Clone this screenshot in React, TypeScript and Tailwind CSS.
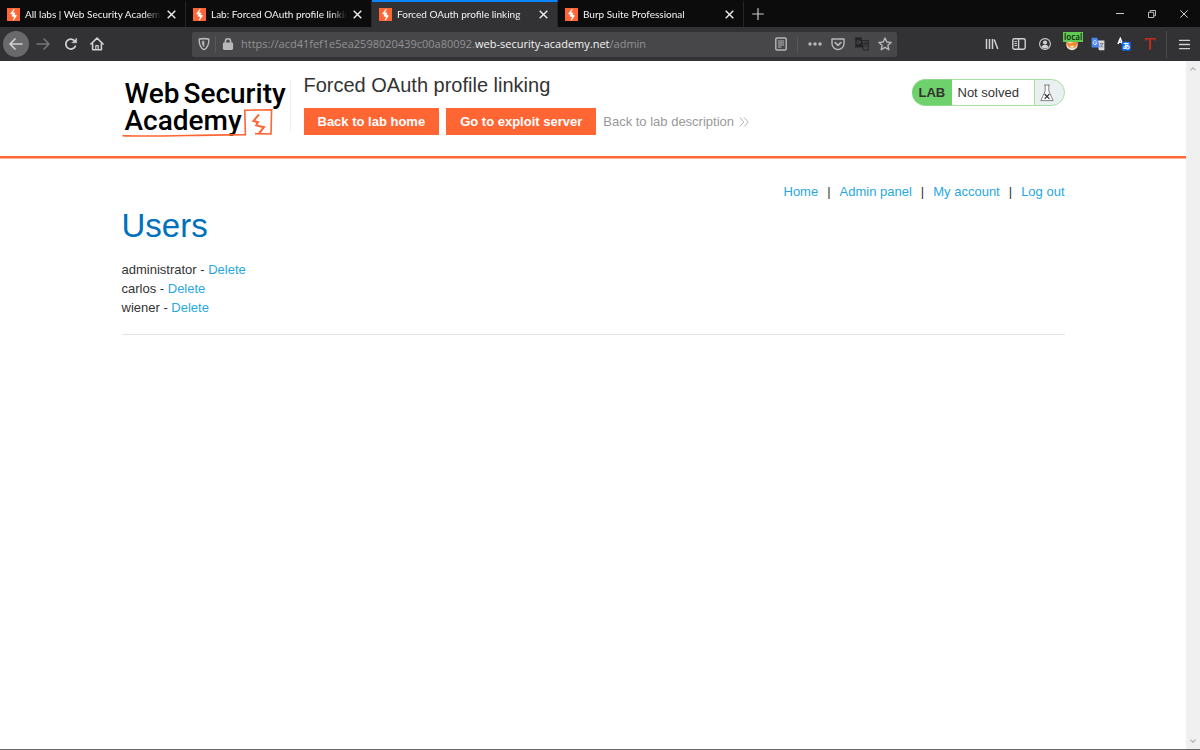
import React from "react";
import { clsx } from "clsx";

const tabs = [
  { title: "All labs | Web Security Academy", active: false },
  { title: "Lab: Forced OAuth profile linking", active: false },
  { title: "Forced OAuth profile linking", active: true },
  { title: "Burp Suite Professional", active: false },
];

const users = ["administrator", "carlos", "wiener"];

const navLinks = ["Home", "Admin panel", "My account", "Log out"];

function Favicon() {
  return (
    <svg viewBox="0 0 13 13" className="size-[13px] shrink-0">
      <rect width="13" height="13" fill="#ff6633" />
      <path d="M7 0.8 L3 6 L5.6 6.6 L4.4 8.2 L7.2 9 L5.6 12.2 L6.6 12.6 L10 7.4 L7.4 6.4 L8.6 5 L6 4.2 L7.8 1.2 Z" fill="#fff" />
    </svg>
  );
}

function CloseIcon() {
  return (
    <svg viewBox="0 0 9 9" className="size-[9px]" stroke="#eee" strokeWidth="1.4" fill="none">
      <path d="M0.7 0.7 L8.3 8.3 M8.3 0.7 L0.7 8.3" />
    </svg>
  );
}

function Icon({ children, className }: { children: React.ReactNode; className?: string }) {
  return (
    <svg
      viewBox="0 0 14 14"
      className={clsx("shrink-0", className || "size-[14px]")}
      fill="none"
      stroke="currentColor"
      strokeWidth="1.4"
      strokeLinecap="round"
      strokeLinejoin="round"
    >
      {children}
    </svg>
  );
}

function ToolButton({ label, children, className }: { label: string; children: React.ReactNode; className?: string }) {
  return (
    <button aria-label={label} className={clsx("flex items-center justify-center h-[26px] shrink-0", className)}>
      {children}
    </button>
  );
}

function TabStrip() {
  return (
    <div className="flex h-[27px] bg-[#0c0c0d]">
      {tabs.map((tab) => (
        <div
          key={tab.title}
          className={clsx(
            "flex items-center w-[186px] pl-[7px] pr-2 pb-px border-t-2 border-r border-r-[#252526]",
            tab.active ? "bg-[#323234] border-t-[#0a84ff]" : "border-t-transparent"
          )}
        >
          <Favicon />
          <button className="flex-1 min-w-0 ml-[5px] mr-1 text-left font-['Lato',sans-serif] text-[10px] leading-4 text-[#f4f4f5] whitespace-nowrap overflow-hidden [mask-image:linear-gradient(to_right,#000_88%,transparent)]">
            {tab.title}
          </button>
          <button aria-label="Close tab" className="flex items-center justify-center size-3">
            <CloseIcon />
          </button>
        </div>
      ))}
      <button aria-label="New tab" className="flex items-center justify-center w-[27px] text-[#c8c8c8]">
        <Icon className="size-3">
          <path d="M7 0.7 V13.3 M0.7 7 H13.3" />
        </Icon>
      </button>
      <div className="flex items-center ml-auto text-[#d0d0d0]">
        <button aria-label="Minimize" className="flex items-center justify-center w-8 h-full">
          <svg viewBox="0 0 8 8" className="size-2" stroke="currentColor" fill="none"><path d="M0 3.5 H8" /></svg>
        </button>
        <button aria-label="Restore" className="flex items-center justify-center w-8 h-full">
          <svg viewBox="0 0 8 8" className="size-2" stroke="currentColor" strokeWidth="0.9" fill="none">
            <path d="M0.5 2.3 H5.7 V7.5 H0.5 Z M2.3 2 V0.5 H7.5 V5.7 H6" />
          </svg>
        </button>
        <button aria-label="Close window" className="flex items-center justify-center w-8 h-full">
          <svg viewBox="0 0 8 8" className="size-2" stroke="currentColor" fill="none"><path d="M0.3 0.3 L7.7 7.7 M7.7 0.3 L0.3 7.7" /></svg>
        </button>
      </div>
    </div>
  );
}

function UrlBar() {
  return (
    <div className="flex items-center flex-1 min-w-0 h-[25px] px-[5px] mx-[82px] rounded-[2px] bg-[#474749] text-[#b8b8ba]">
      <Icon>
        <path d="M7 1.5 C8.6 1.8 10 2 11.8 2 C12 7 11 10.8 7 12.6 C3 10.8 2 7 2.2 2 C4 2 5.4 1.8 7 1.5 Z" />
        <path d="M7 4.4 V9.6 C5.6 8.6 5.2 7 5.2 4.6 Z" fill="currentColor" strokeWidth="0.6" />
      </Icon>
      <span className="w-px h-[17px] ml-1 mr-[5px] bg-[#58585a]" />
      <Icon>
        <rect x="2.6" y="6.2" width="8.8" height="6" rx="0.6" fill="currentColor" />
        <path d="M4.4 6 V4.4 A2.6 2.6 0 0 1 9.6 4.4 V6" strokeWidth="1.6" />
      </Icon>
      <div className="flex-1 min-w-0 ml-[6px] font-['Open_Sans',sans-serif] text-[11px] leading-4 text-[#919193] whitespace-nowrap overflow-hidden">
        https://acd41fef1e5ea2598020439c00a80092.<span className="text-[#f4f4f5]">web-security-academy.net</span>/admin
      </div>
      <ToolButton label="Reader view">
        <Icon>
          <rect x="1.8" y="1" width="10.4" height="12" rx="1.2" />
          <path d="M4.3 4 H9.7 M4.3 6 H9.7 M4.3 8 H9.7 M4.3 10 H7" strokeWidth="1" />
        </Icon>
      </ToolButton>
      <span className="w-px h-[17px] ml-[9px] mr-[10px] bg-[#58585a]" />
      <ToolButton label="Page actions">
        <Icon>
          <g fill="currentColor" stroke="none">
            <circle cx="2" cy="7" r="1.7" />
            <circle cx="7" cy="7" r="1.7" />
            <circle cx="12" cy="7" r="1.7" />
          </g>
        </Icon>
      </ToolButton>
      <ToolButton label="Save to Pocket" className="ml-[9px]">
        <Icon>
          <path d="M1 2 H13 V6.5 A6 6 0 0 1 1 6.5 Z" />
          <path d="M4.2 5.6 L7 8.3 L9.8 5.6" strokeWidth="1.6" />
        </Icon>
      </ToolButton>
      <ToolButton label="Translate page" className="ml-[10px] text-[#252527]">
        <Icon>
          <path d="M0.5 0.8 H6 L8.5 10 H0.5 Z" fill="currentColor" strokeWidth="0.8" />
          <path d="M7.5 3.6 H13.4 V13 H8.4 L7.5 10.5" strokeWidth="1" />
          <path d="M9 6 H12.4 M10.7 5 V6 M12 6 C11.5 8 10.5 9 9.5 9.6 M9.5 7 L12.2 9.8" strokeWidth="0.8" />
          <circle cx="3.5" cy="5.2" r="1.5" stroke="#5b5b5d" strokeWidth="0.8" />
        </Icon>
      </ToolButton>
      <ToolButton label="Bookmark this page" className="ml-[9px]">
        <Icon>
          <path d="M7 1 L8.8 5 L13.1 5.4 L9.9 8.3 L10.8 12.7 L7 10.4 L3.2 12.7 L4.1 8.3 L0.9 5.4 L5.2 5 Z" />
        </Icon>
      </ToolButton>
    </div>
  );
}

function Toolbar() {
  return (
    <div className="flex items-center h-[34px] pl-[3px] pr-[9px] bg-[#323234] text-[#d0d0d2]">
      <ToolButton label="Back" className="w-[26px] rounded-full bg-[#69696b]">
        <Icon><path d="M1.2 7 H13 M6 2 L1 7 L6 12" strokeWidth="1.7" /></Icon>
      </ToolButton>
      <ToolButton label="Forward" className="w-[28px] text-[#77777a]">
        <Icon><path d="M1 7 H12.8 M8 2 L13 7 L8 12" strokeWidth="1.5" /></Icon>
      </ToolButton>
      <ToolButton label="Reload" className="w-[27px]">
        <Icon>
          <path d="M11.3 9.3 A5 5 0 1 1 10.8 4" strokeWidth="1.8" />
          <path d="M12.6 1.4 V5.8 H8.2 Z" fill="currentColor" strokeWidth="0.6" />
        </Icon>
      </ToolButton>
      <ToolButton label="Home" className="w-[26px]">
        <Icon>
          <path d="M0.9 7 L7 1.2 L13.1 7 M2.6 6.6 V12.8 H11.4 V6.6" strokeWidth="1.6" />
          <path d="M5.8 12.6 V8.6 H8.2 V12.6" strokeWidth="1.2" />
        </Icon>
      </ToolButton>

      <UrlBar />

      <div className="flex items-center">
        <ToolButton label="Library" className="w-[26px]">
          <Icon><path d="M1.5 2 V12 M4.5 2 V12 M7.5 2 V12 M9.2 2.5 L12.8 12" strokeLinecap="butt" strokeWidth="1.5" /></Icon>
        </ToolButton>
        <ToolButton label="Sidebars" className="w-[27px]">
          <Icon>
            <rect x="0.8" y="1.8" width="12.4" height="10.4" rx="1.6" />
            <path d="M6.6 2 V12" />
            <path d="M2.8 4.6 H4.6 M2.8 6.6 H4.6 M2.8 8.6 H4.6" strokeWidth="1" />
          </Icon>
        </ToolButton>
        <ToolButton label="Account" className="w-[26px]">
          <Icon>
            <circle cx="7" cy="7" r="5.4" strokeWidth="1.1" />
            <circle cx="7" cy="5.6" r="2.1" fill="currentColor" stroke="none" />
            <path d="M3.4 10 C4 8.2 5.4 8 7 8 C8.6 8 10 8.2 10.6 10 C9.6 11 8.4 11.4 7 11.4 C5.6 11.4 4.4 11 3.4 10 Z" fill="currentColor" stroke="none" />
          </Icon>
        </ToolButton>
        <ToolButton label="FoxyProxy" className="relative w-[27px]">
          <svg viewBox="0 0 14 14" className="size-[14px]">
            <circle cx="7" cy="7.4" r="5.8" fill="#e9dccb" />
            <path d="M1.2 4.5 L5 6.4 L10 4.6 L12.4 5 C12.4 8.6 10.6 11 7.4 11 C4.4 11 2 9.2 1.2 4.5 Z" fill="#ef8a2e" />
            <path d="M5 9 L7 11 L9.4 8.8 Z" fill="#fff" />
          </svg>
          <span className="absolute top-px left-[5px] px-px text-[8px] leading-[10px] font-semibold text-[#10300c] bg-[#62cb55]">local</span>
        </ToolButton>
        <ToolButton label="Google Translate" className="w-[26px]">
          <svg viewBox="0 0 14 14" className="size-[14px]">
            <path d="M5 3.6 H13.4 V13.2 H8 Z" fill="#dcdcdc" />
            <path d="M0.6 0.8 H6.4 L8.8 10.4 H0.6 Z" fill="#4a86ee" />
            <path d="M5.6 4.5 A1.9 1.9 0 1 0 5.9 6 H4.2" fill="none" stroke="#fff" strokeWidth="0.8" />
            <path d="M8.8 6.4 H12.4 M11.6 6.6 C11.2 8.6 10.4 9.4 9.4 10.2 M9.4 7.6 L12 10.6" fill="none" stroke="#5f6368" strokeWidth="0.8" />
          </svg>
        </ToolButton>
        <ToolButton label="Translate" className="w-[26px]">
          <svg viewBox="0 0 14 14" className="size-[14px]">
            <path d="M1 7 L3.3 1.4 L5.6 7 M1.8 5.2 H4.8" fill="none" stroke="#fff" strokeWidth="1.5" />
            <rect x="4.8" y="4.8" width="9" height="9" rx="1.4" fill="#0b68f0" />
            <text x="5.5" y="12.2" fontSize="7.6" fontWeight="700" fill="#fff" fontFamily="Noto Sans CJK JP, sans-serif">あ</text>
          </svg>
        </ToolButton>
        <ToolButton label="Tampermonkey" className="w-[26px]">
          <svg viewBox="0 0 14 14" className="size-[14px]">
            <path d="M2.6 3.6 V1.8 H11.8 V3.6" fill="none" stroke="#bf2d18" strokeWidth="1.4" />
            <path d="M7.1 2 V12.8" fill="none" stroke="#bf2d18" strokeWidth="2" />
          </svg>
        </ToolButton>
      </div>
      <span className="w-px h-[27px] ml-[3px] mr-[11px] bg-[#4a4a4c]" />
      <ToolButton label="Open menu">
        <Icon className="size-[13px]"><path d="M1.6 2.6 H12.4 M1.6 7 H12.4 M1.6 11.4 H12.4" strokeWidth="1.4" /></Icon>
      </ToolButton>
    </div>
  );
}

function Logo() {
  return (
    <a href="#" className="relative block w-[169px] h-[52px] pl-[3px] text-black font-['Roboto',sans-serif] font-medium text-[28px] leading-[27px] border-r border-[#efefef]">
      <span className="flex gap-1">
        <span>Web</span>
        <span>Security</span>
      </span>
      <span className="block">Academy</span>
      <svg viewBox="0 0 168 60" className="absolute left-0 top-0 w-[168px] h-[60px]" fill="none" stroke="#ff6633" strokeWidth="1.6">
        <path d="M0.5 55.6 C20 57 70 55 123.4 54.6 L122.8 30.2 L149.6 29.8 L149 54 L133 53.6" />
        <path d="M137 34.4 L131.4 41 L136 42.2 L134.2 45.4 L142 47.2 L137.2 53" strokeWidth="2" />
      </svg>
    </a>
  );
}

function LabStatus() {
  return (
    <div className="flex w-[153px] h-[27px] text-[13px] leading-[25px]">
      <p className="w-10 pl-[7px] rounded-l-full border-y border-[#8ddb8a] font-bold bg-[#6fd16c]">LAB</p>
      <p className="flex-1 pl-[6px] border-y border-[#a5e0a2]">Not solved</p>
      <span className="flex items-center w-[31px] pl-[5px] rounded-r-full border border-[#a5e0a2] bg-[#eaeff2]">
        <svg viewBox="0 0 14 18" className="w-[14px] h-[18px]" fill="#fff" stroke="#777" strokeWidth="0.9">
          <path d="M4.2 1 H9.8 M5.2 1 V7 L0.8 16.6 H13.2 L8.8 7 V1" />
          <path d="M4.6 10 L9.4 14.8 M9.4 10 L4.6 14.8" stroke="#333" strokeWidth="1.2" />
        </svg>
      </span>
    </div>
  );
}

function LabHeader() {
  return (
    <header className="border-b-2 border-[#ff6633] shadow-[0_1px_0_#ffb299]">
      <div className="flex items-start h-[95px] max-w-[943px] mx-auto">
        <div className="pt-[19px]">
          <Logo />
        </div>
        <div className="pt-3 ml-[13px]">
          <h2 className="text-[20px] leading-6">Forced OAuth profile linking</h2>
          <div className="flex items-center gap-[7px] mt-[11px] text-[13px] leading-[27px]">
            <a href="#" className="px-[14px] font-bold text-white bg-[#ff6633]">Back to lab home</a>
            <a href="#" className="px-[14px] font-bold text-white bg-[#ff6633]">Go to exploit server</a>
            <a href="#" className="flex items-center gap-[5px] text-[#999]">
              Back to lab description
              <svg viewBox="0 0 10 10" className="size-[10px]" fill="none" stroke="#aaa" strokeWidth="0.9">
                <path d="M0.8 0.5 L4.8 5 L0.8 9.5 M5.2 0.5 L9.2 5 L5.2 9.5" />
              </svg>
            </a>
          </div>
        </div>
        <div className="pt-[18px] ml-auto">
          <LabStatus />
        </div>
      </div>
    </header>
  );
}

export default function App() {
  return (
    <div className="flex flex-col min-h-screen bg-white border-b border-[#666] font-['Noto_Sans',sans-serif]">
      <TabStrip />
      <Toolbar />
      <div className="flex flex-1">
        <div className="flex-1 min-w-0 text-[#333332] font-['Liberation_Sans',Arial,sans-serif]">
          <LabHeader />
          <main className="max-w-[943px] mx-auto text-[13px] leading-[19px]">
            <nav className="flex justify-end gap-[9px] pt-6">
              {navLinks.map((link, i) => (
                <React.Fragment key={link}>
                  {i > 0 && <span>|</span>}
                  <a href="#" className="text-[#29a7df]">{link}</a>
                </React.Fragment>
              ))}
            </nav>
            <h1 className="mt-[5px] text-[33px] leading-10 text-[#0071bc]">Users</h1>
            <ul className="mt-[14px]">
              {users.map((user) => (
                <li key={user}>
                  {user} - <a href="#" className="text-[#29a7df]">Delete</a>
                </li>
              ))}
            </ul>
            <hr className="mt-[17px] border-[#e3e3e3]" />
          </main>
        </div>
        <div className="flex flex-col items-center justify-between w-[14px] py-[6px] bg-[#f0f0f0]">
          <svg viewBox="0 0 6 4" className="w-[6px] h-1" fill="none" stroke="#b0b0b0" strokeWidth="1.2"><path d="M0.4 3.4 L3 0.8 L5.6 3.4" /></svg>
          <svg viewBox="0 0 6 4" className="w-[6px] h-1" fill="none" stroke="#b0b0b0" strokeWidth="1.2"><path d="M0.4 0.6 L3 3.2 L5.6 0.6" /></svg>
        </div>
      </div>
    </div>
  );
}
